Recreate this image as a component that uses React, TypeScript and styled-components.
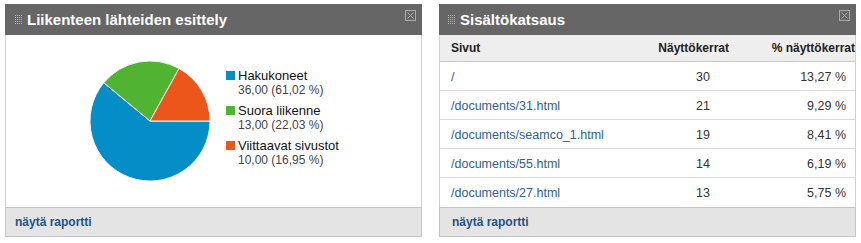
import React from 'react';
import styled, { createGlobalStyle } from 'styled-components';

const GlobalStyle = createGlobalStyle`
  body {
    margin: 0;
    background: #ffffff;
    font-family: "Liberation Sans", Arial, sans-serif;
  }
`;

const Page = styled.div`
  display: flex;
  gap: 17px;
  padding: 4px 5px;
`;

const Panel = styled.div`
  width: 417px;
  display: flex;
  flex-direction: column;
`;

const Header = styled.div<{ $pad: number }>`
  height: 31px;
  background: #666666;
  display: flex;
  align-items: center;
  padding: 0 6px 0 ${(p) => p.$pad}px;
  box-sizing: border-box;
`;

const Title = styled.h3`
  flex: 1;
  margin: 0 0 0 5px;
  color: #ffffff;
  font-size: 15px;
  font-weight: bold;
  line-height: 17px;
`;

const Body = styled.div`
  border-left: 1px solid #cfcfcf;
  border-right: 1px solid #cfcfcf;
  background: #ffffff;
  height: 172px;
  box-sizing: border-box;
`;

const ChartBody = styled(Body)`
  display: flex;
  align-items: flex-start;
  padding: 25px 0 0 83px;
`;

const Legend = styled.ul`
  list-style: none;
  margin: 8px 0 0 15px;
  padding: 0;
  display: flex;
  flex-direction: column;
  gap: 5px;
`;

const LegendItem = styled.li`
  display: flex;
  flex-direction: column;
`;

const LegendLabel = styled.span<{ $color: string }>`
  position: relative;
  padding-left: 12px;
  font-size: 13px;
  line-height: 15px;
  color: #111111;

  &::before {
    content: '';
    position: absolute;
    left: 0;
    top: 3px;
    width: 9px;
    height: 9px;
    background: ${(p) => p.$color};
  }
`;

const LegendValue = styled.span`
  padding-left: 12px;
  font-size: 12px;
  line-height: 15px;
  color: #444444;
`;

const Table = styled.div`
  display: grid;
  grid-template-columns: 1fr 115px 120px;
`;

const HeadCell = styled.div<{ $right?: boolean; $pr?: number }>`
  height: 27px;
  background: #eeeeee;
  border-bottom: 1px solid #c9c9c9;
  box-sizing: border-box;
  display: flex;
  align-items: center;
  justify-content: ${(p) => (p.$right ? 'flex-end' : 'flex-start')};
  padding: 0 ${(p) => p.$pr ?? 0}px 0 ${(p) => (p.$right ? 0 : 11)}px;
  font-size: 12px;
  font-weight: bold;
  color: #222222;
  white-space: nowrap;
`;

const Cell = styled.div<{ $right?: boolean; $pr?: number; $last?: boolean }>`
  height: 29px;
  border-bottom: ${(p) => (p.$last ? 'none' : '1px solid #d9d9d9')};
  box-sizing: border-box;
  display: flex;
  align-items: center;
  justify-content: ${(p) => (p.$right ? 'flex-end' : 'flex-start')};
  padding: 1px ${(p) => p.$pr ?? 0}px 0 ${(p) => (p.$right ? 0 : 11)}px;
  font-size: 12.5px;
  color: #333333;
  white-space: nowrap;
`;

const PageLink = styled.a`
  color: #2f6090;
  text-decoration: none;
`;

const Footer = styled.div<{ $pad: number }>`
  height: 30px;
  background: #e4e4e4;
  border: 1px solid #c4c4c4;
  box-sizing: border-box;
  display: flex;
  align-items: center;
  padding-left: ${(p) => p.$pad}px;
`;

const FooterLink = styled.a`
  color: #1f5384;
  font-size: 12px;
  font-weight: bold;
  text-decoration: none;
`;

const Grip = () => {
  const dots = [];
  for (let x = 0; x < 4; x++) {
    for (let y = 0; y < 5; y++) {
      dots.push(<rect key={`${x}-${y}`} x={x * 2} y={y * 2} width={1} height={1} fill="#b8b8b8" />);
    }
  }
  return (
    <svg width="7" height="9" viewBox="0 0 7 9">
      {dots}
    </svg>
  );
};

const CloseIcon = () => (
  <svg width="11" height="11" viewBox="0 0 11 11" style={{ marginBottom: 8 }}>
    <rect x="0.5" y="0.5" width="10" height="10" fill="none" stroke="#a9a9a9" />
    <path d="M2.5 2.5 L8.5 8.5 M8.5 2.5 L2.5 8.5" stroke="#a9a9a9" strokeWidth="1" />
  </svg>
);

const legend = [
  { label: 'Hakukoneet', value: '36,00 (61,02 %)', color: '#058dc7' },
  { label: 'Suora liikenne', value: '13,00 (22,03 %)', color: '#50b432' },
  { label: 'Viittaavat sivustot', value: '10,00 (16,95 %)', color: '#ed561b' },
];

const rows = [
  { page: '/', views: '30', pct: '13,27 %' },
  { page: '/documents/31.html', views: '21', pct: '9,29 %' },
  { page: '/documents/seamco_1.html', views: '19', pct: '8,41 %' },
  { page: '/documents/55.html', views: '14', pct: '6,19 %' },
  { page: '/documents/27.html', views: '13', pct: '5,75 %' },
];

const Pie = () => (
  <svg width="122" height="122" viewBox="0 0 122 122">
    <path d="M61 61 L121 61 A60 60 0 1 1 14.8 22.72 Z" fill="#058dc7" stroke="#f4f4f4" strokeWidth="1" />
    <path d="M61 61 L14.8 22.72 A60 60 0 0 1 90.07 8.51 Z" fill="#50b432" stroke="#f4f4f4" strokeWidth="1" />
    <path d="M61 61 L90.07 8.51 A60 60 0 0 1 121 61 Z" fill="#ed561b" stroke="#f4f4f4" strokeWidth="1" />
  </svg>
);

export default function App() {
  return (
    <>
      <GlobalStyle />
      <Page>
        <Panel>
          <Header $pad={10}>
            <Grip />
            <Title>Liikenteen lähteiden esittely</Title>
            <CloseIcon />
          </Header>
          <ChartBody>
            <Pie />
            <Legend>
              {legend.map((l) => (
                <LegendItem key={l.label}>
                  <LegendLabel $color={l.color}>{l.label}</LegendLabel>
                  <LegendValue>{l.value}</LegendValue>
                </LegendItem>
              ))}
            </Legend>
          </ChartBody>
          <Footer $pad={9}>
            <FooterLink href="#">näytä raportti</FooterLink>
          </Footer>
        </Panel>
        <Panel>
          <Header $pad={9}>
            <Grip />
            <Title>Sisältökatsaus</Title>
            <CloseIcon />
          </Header>
          <Body>
            <Table>
              <HeadCell>Sivut</HeadCell>
              <HeadCell $right $pr={6}>Näyttökerrat</HeadCell>
              <HeadCell $right $pr={0}>% näyttökerrat</HeadCell>
              {rows.map((r, i) => (
                <React.Fragment key={r.page}>
                  <Cell $last={i === rows.length - 1}>
                    <PageLink href="#">{r.page}</PageLink>
                  </Cell>
                  <Cell $right $pr={25} $last={i === rows.length - 1}>{r.views}</Cell>
                  <Cell $right $pr={9} $last={i === rows.length - 1}>{r.pct}</Cell>
                </React.Fragment>
              ))}
            </Table>
          </Body>
          <Footer $pad={12}>
            <FooterLink href="#">näytä raportti</FooterLink>
          </Footer>
        </Panel>
      </Page>
    </>
  );
}
